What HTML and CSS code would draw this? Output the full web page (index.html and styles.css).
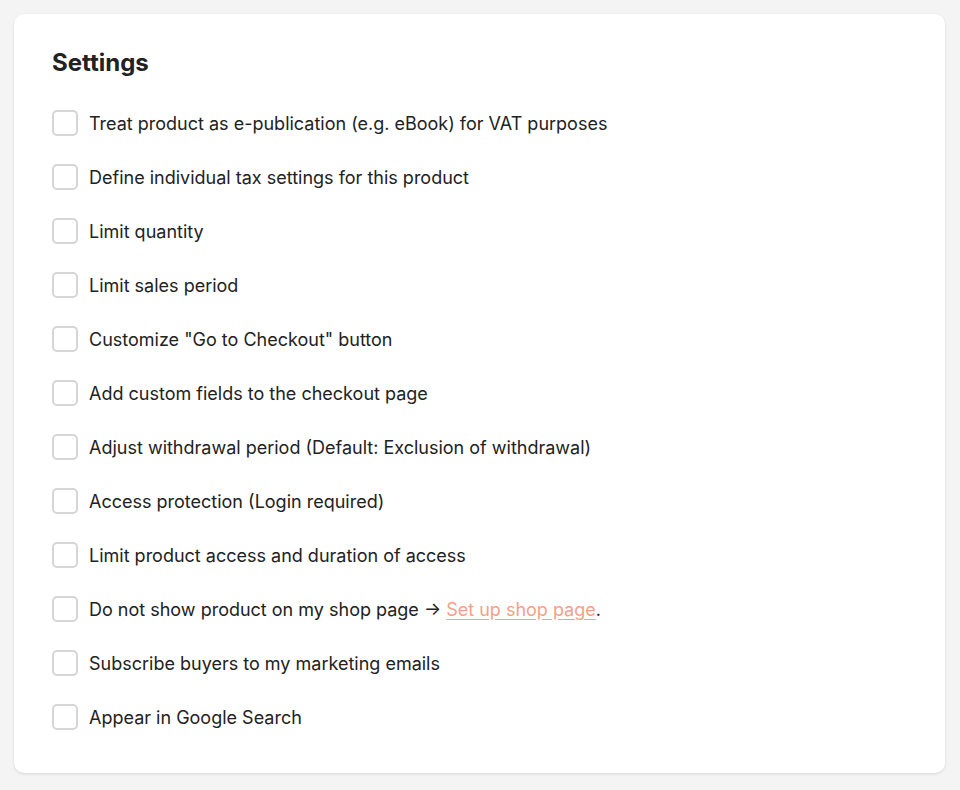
FILE: index.html
```html
<!DOCTYPE html>
<html>
<head>
  <meta charset="UTF-8">
  <title>Settings</title>
  <link rel="stylesheet" href="styles.css">
</head>
<body>
  <div class="card">
    <h2 class="card-title">Settings</h2>
    <ul class="settings-list">
      <li><label><input type="checkbox"> <span>Treat product as e-publication (e.g. eBook) for VAT purposes</span></label></li>
      <li><label><input type="checkbox"> <span>Define individual tax settings for this product</span></label></li>
      <li><label><input type="checkbox"> <span>Limit quantity</span></label></li>
      <li><label><input type="checkbox"> <span>Limit sales period</span></label></li>
      <li><label><input type="checkbox"> <span>Customize "Go to Checkout" button</span></label></li>
      <li><label><input type="checkbox"> <span>Add custom fields to the checkout page</span></label></li>
      <li><label><input type="checkbox"> <span>Adjust withdrawal period (Default: Exclusion of withdrawal)</span></label></li>
      <li><label><input type="checkbox"> <span>Access protection (Login required)</span></label></li>
      <li><label><input type="checkbox"> <span>Limit product access and duration of access</span></label></li>
      <li><label><input type="checkbox"> <span>Do not show product on my shop page &rarr; <a href="#">Set up shop page</a>.</span></label></li>
      <li><label><input type="checkbox"> <span>Subscribe buyers to my marketing emails</span></label></li>
      <li><label><input type="checkbox"> <span>Appear in Google Search</span></label></li>
    </ul>
  </div>
</body>
</html>
```

FILE: styles.css
```css
body {
  margin: 0;
  padding: 14px 15px 14px 14px;
  background-color: #f4f4f4;
  font-family: Inter, "Noto Sans", sans-serif;
  color: #222;
}

.card {
  background-color: #fff;
  border-radius: 10px;
  box-shadow: 0 1px 3px rgba(0, 0, 0, 0.12);
  padding: 34px 38px 43px;
}

.card-title {
  margin: 0 0 32px;
  font-size: 24px;
  font-weight: 700;
  line-height: 30px;
  color: #222;
}

.settings-list {
  list-style: none;
  margin: 0;
  padding: 0;
  display: flex;
  flex-direction: column;
  gap: 28px;
}

.settings-list label {
  display: flex;
  align-items: center;
  gap: 11px;
  font-size: 18px;
  cursor: pointer;
}

.settings-list input[type="checkbox"] {
  appearance: none;
  margin: 0;
  width: 26px;
  height: 26px;
  border: 2px solid #d6d6d6;
  border-radius: 5px;
  background: #fff;
  flex-shrink: 0;
}

.settings-list a {
  color: #f3a187;
  text-decoration: underline;
  text-underline-offset: 3px;
}
```
